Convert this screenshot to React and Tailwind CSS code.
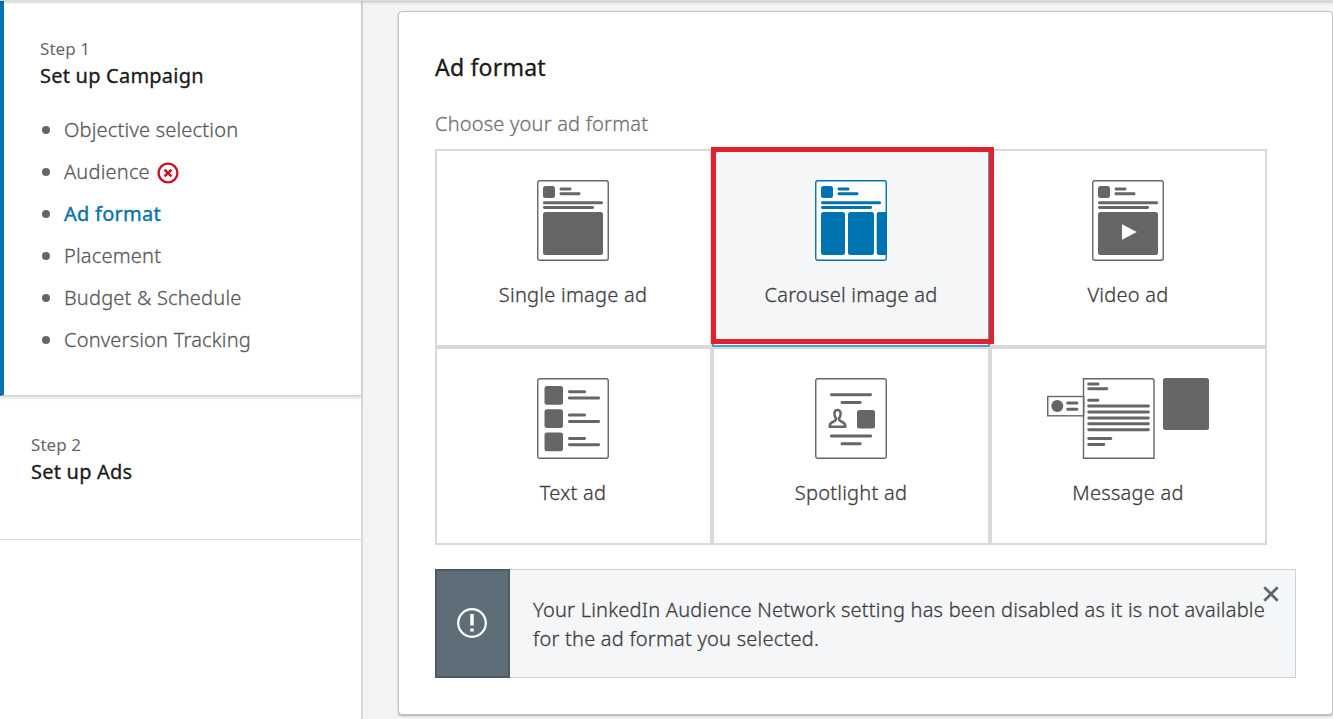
import React from 'react';
import clsx from 'clsx';

const campaignSteps = [
    { label: 'Objective selection' },
    { label: 'Audience', error: true },
    { label: 'Ad format', active: true },
    { label: 'Placement' },
    { label: 'Budget & Schedule' },
    { label: 'Conversion Tracking' },
];

const ErrorIcon = () => (
    <svg width="22" height="22" viewBox="0 0 22 22" fill="none" stroke="#c4162f">
        <circle cx="11" cy="11" r="9.4" strokeWidth="2.4" />
        <path d="M7.6 7.6l6.8 6.8M14.4 7.6l-6.8 6.8" strokeWidth="2.6" />
    </svg>
);

// Sheet outline shared by the format icons
const Sheet = ({ fill = 'none', children }) => (
    <svg width="72" height="82" viewBox="0 0 72 82" fill="currentColor">
        <rect x="0.75" y="0.75" width="70.5" height="79.5" rx="2" fill={fill} stroke="currentColor" strokeWidth="1.4" />
        {children}
    </svg>
);

const Bar = ({ x, y, w, h = 3 }) => <rect x={x} y={y} width={w} height={h} rx="1.4" />;

const PostHeader = () => (
    <>
        <rect x="6" y="6" width="12" height="12" rx="2.5" />
        <Bar x={22.5} y={7.5} w={12} />
        <Bar x={22.5} y={12.2} w={21} />
        <Bar x={6} y={21.3} w={60} />
        <Bar x={6} y={26} w={51} />
    </>
);

const SingleImageIcon = () => (
    <Sheet>
        <PostHeader />
        <rect x="6" y="32" width="60" height="43" rx="2.5" />
    </Sheet>
);

const CarouselIcon = () => (
    <Sheet fill="#fff">
        <PostHeader />
        <rect x="6" y="32" width="24" height="43" rx="2.5" />
        <rect x="33" y="32" width="26" height="43" rx="2.5" />
        <path d="M64 32h8v43h-8a2.3 2.3 0 0 1-2.3-2.3V34.3a2.3 2.3 0 0 1 2.3-2.3z" />
    </Sheet>
);

const VideoIcon = () => (
    <Sheet>
        <PostHeader />
        <rect x="6" y="32" width="60" height="43" rx="2.5" />
        <path d="M30 44.2v15.6l14.8-7.8z" fill="#fff" />
    </Sheet>
);

const TextIcon = () => (
    <Sheet>
        {[8, 31.3, 54.6].map(y => (
            <g key={y}>
                <rect x="7.5" y={y} width="18.5" height="18.7" rx="2.5" />
                <Bar x={31} y={y + 4.3} w={18} />
                <Bar x={31} y={y + 10.6} w={32} />
            </g>
        ))}
    </Sheet>
);

const SpotlightIcon = () => (
    <Sheet>
        <Bar x={15} y={15.2} w={42} />
        <Bar x={25.6} y={23} w={21} />
        <path
            d="M22.5 31.9c-2.1 0-3.1 1.5-3.1 3.6 0 2.3.8 4 1.7 5.100-.1 1.600-.9 2.400-2.300 2.900-2.400.9-4 2-4 3.900v1.300h15.400v-1.300c0-1.900-1.600-3-4-3.900-1.400-.5-2.200-1.300-2.300-2.900.9-1.100 1.700-2.800 1.700-5.100 0-2.100-1-3.600-3.100-3.600z"
            fill="none"
            stroke="currentColor"
            strokeWidth="2.5"
        />
        <rect x="42" y="32" width="18" height="18.5" rx="2.5" />
        <Bar x={15} y={56.6} w={42} />
        <Bar x={25.6} y={64.3} w={21} />
    </Sheet>
);

const MessageIcon = () => (
    <svg width="162" height="82" viewBox="0 0 162 82" fill="currentColor">
        <g fill="none" stroke="currentColor" strokeWidth="1.4">
            <rect x="0.75" y="18.5" width="36" height="19.3" />
            <path d="M36.5 .75h68.5q2 0 2 2v77.500H36.500z" />
        </g>
        <circle cx="10.3" cy="28" r="6" />
        <Bar x={19.3} y={23.6} w={12} />
        <Bar x={19.3} y={29.7} w={12} />
        <Bar x={40.3} y={4.6} w={12} />
        <Bar x={40.3} y={9.2} w={21} />
        <Bar x={40.3} y={20.7} w={12} />
        {[26.6, 32.5, 38.4, 44.3, 50.2].map(y => (
            <Bar key={y} x={40.3} y={y} w={62.5} />
        ))}
        <Bar x={40.3} y={59} w={25} />
        <Bar x={40.3} y={65} w={18} />
        <rect x="116" y="0" width="46" height="52" rx="2.5" />
    </svg>
);

const formats = [
    { label: 'Single image ad', Icon: SingleImageIcon },
    { label: 'Carousel image ad', Icon: CarouselIcon, selected: true },
    { label: 'Video ad', Icon: VideoIcon },
    { label: 'Text ad', Icon: TextIcon },
    { label: 'Spotlight ad', Icon: SpotlightIcon },
    { label: 'Message ad', Icon: MessageIcon },
];

const FormatCard = ({ label, Icon, selected }) => (
    <div
        className={clsx(
            'relative flex h-[198px] flex-col items-center border-2 pt-[29px] pr-px nth-[3n+2]:pr-0',
            selected ? 'border-[#4c9fc9] bg-[#f4f6f8] text-[#0073b1]' : 'border-[#d9d9d9] text-[#666]'
        )}
    >
        <Icon />
        <span className="mt-[17px] text-xl leading-8 text-[#404040]">{label}</span>
        {selected && <div className="absolute -top-[4px] -left-[3px] z-10 h-[197px] w-[283px] border-[5px] border-[#e0222e]" />}
    </div>
);

const StepTitle = ({ step, title }) => (
    <>
        <p className="text-[17px] leading-6 font-normal tracking-[0.05px] text-[#666] [-webkit-text-stroke:0]">{step}</p>
        <h2 className="mt-px text-xl leading-7 font-normal tracking-[0.22px] text-[#1a1a1a] [-webkit-text-stroke:0.3px]">{title}</h2>
    </>
);

const Sidebar = () => (
    <aside className="w-[363px] shrink-0 border-r-2 border-[#d9d9d9] bg-white">
        <section className="h-[395px] border-b border-l-4 border-b-[#d4d4d4] border-l-[#0073b1] pt-9 pl-9 shadow-[0_2px_3px_rgba(0,0,0,0.15)]">
            <StepTitle step="Step 1" title="Set up Campaign" />
            <ul className="mt-[19px]">
                {campaignSteps.map(({ label, error, active }) => (
                    <li key={label} className="flex h-[42px] items-center pl-[2px]">
                        <span className="mr-[14px] size-2 rounded-full bg-[#666]" />
                        <span
                            className={clsx(
                                active
                                    ? 'font-normal text-[#0b73ab] [-webkit-text-stroke:0.4px]'
                                    : 'tracking-[0.2px] text-[#5a5a5a]'
                            )}
                        >
                            {label}
                        </span>
                        {error && <span className="mt-[2px] ml-[7px]"><ErrorIcon /></span>}
                    </li>
                ))}
            </ul>
        </section>
        <section className="h-[144px] border-b border-[#dadada] pt-[37px] pl-[31px]">
            <StepTitle step="Step 2" title="Set up Ads" />
        </section>
    </aside>
);

const Notice = () => (
    <div className="mt-6 flex h-[109px] w-[861px] border border-[#cfd3d6] bg-[#f4f6f8]">
        <div className="-m-px mr-0 flex w-[75px] shrink-0 items-center justify-center border-2 border-[#4b5a64] bg-[#5d6e79] pr-px pb-px">
            <svg width="32" height="32" viewBox="0 0 32 32" fill="none" stroke="#fff">
                <circle cx="16" cy="16" r="13.8" strokeWidth="2.3" />
                <path d="M16 7v11.500M16 21.500v3" strokeWidth="3.4" />
            </svg>
        </div>
        <p className="pt-[25px] pl-[23px] leading-[29px] tracking-[0.225px] whitespace-nowrap text-[#404040]">
            Your LinkedIn Audience Network setting has been disabled as it is not available
            <br />
            for the ad format you selected.
        </p>
        <svg className="mt-[16px] -ml-[2px] shrink-0" width="16" height="16" viewBox="0 0 16 16" stroke="#5c666d" strokeWidth="2.7">
            <path d="M1.300 1.300l13.400 13.400M14.700 1.300L1.300 14.700" />
        </svg>
    </div>
);

export default function App() {
    return (
        <div className="flex h-[719px] w-[1333px] flex-col overflow-hidden bg-[#f4f4f4] font-['Noto_Sans','Open_Sans',sans-serif] text-xl font-light tracking-[0.25px] [-webkit-text-stroke:0.3px]">
            <div className="z-10 h-px shrink-0 bg-[#dcdcdc] shadow-[0_1px_3px_rgba(0,0,0,0.45)]" />
            <div className="flex min-h-0 flex-1">
                <Sidebar />
                <main className="mt-[10px] ml-[35px] h-[704px] w-[935px] shrink-0 rounded border border-[#c4c4c4] bg-white pt-[38px] pl-9 shadow-[0_1px_2px_rgba(0,0,0,0.3)]">
                    <h1 className="text-[23px] leading-[34px] font-normal tracking-[0.22px] text-[#1a1a1a] [-webkit-text-stroke:0.3px]">Ad format</h1>
                    <p className="mt-[26px] leading-[28px] tracking-[0.2px] text-[#737373]">Choose your ad format</p>
                    <div className="mt-[11px] grid w-[832px] grid-cols-[277px_278px_277px]">
                        {formats.map(format => (
                            <FormatCard key={format.label} {...format} />
                        ))}
                    </div>
                    <Notice />
                </main>
            </div>
        </div>
    );
}
